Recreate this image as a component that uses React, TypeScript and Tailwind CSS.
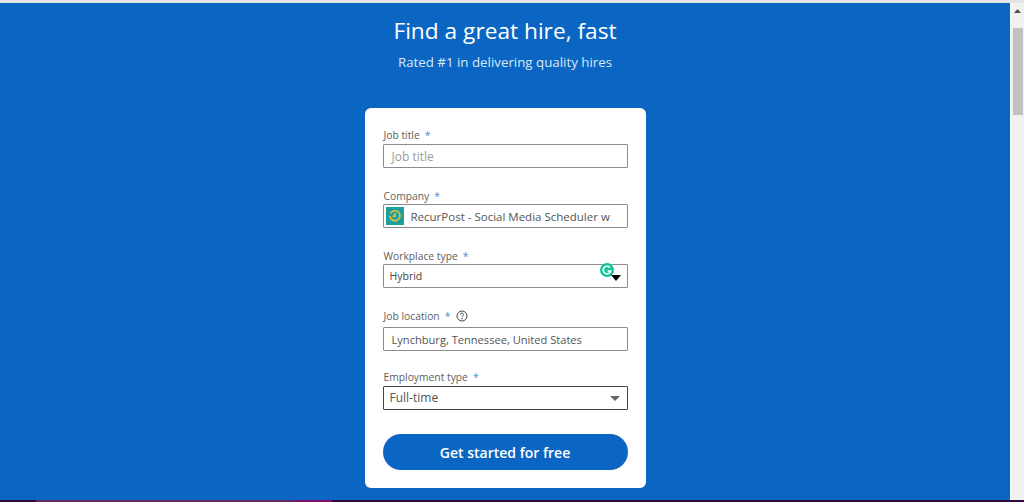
import React from "react";

const Star = () => <span className="ml-[5px] text-[#3d8fd6]">*</span>;

function Label({ children, help }: { children: string; help?: boolean }) {
  return (
    <div className="flex h-[18px] items-center pl-px text-[10.3px] leading-[18px] text-[#5e5e5e]">
      <span>{children}</span>
      <Star />
      {help && (
        <svg className="ml-[6px]" width="12" height="12" viewBox="0 0 12 12" fill="none">
          <circle cx="6" cy="6" r="5" stroke="#444" strokeWidth="1" />
          <path d="M4.4 4.8C4.4 3.8 5.1 3.2 6 3.2s1.6.6 1.6 1.4c0 1.2-1.6 1.2-1.6 2.4" stroke="#444" strokeWidth="1" />
          <circle cx="6" cy="8.7" r=".7" fill="#444" />
        </svg>
      )}
    </div>
  );
}

function Box({ children, dark, className = "" }: { children: React.ReactNode; dark?: boolean; className?: string }) {
  return (
    <div className={`relative flex h-[24px] w-[245px] items-center rounded-[1px] border bg-white ${dark ? "border-[#444]" : "border-[#8c8c8c]"} ${className}`}>
      {children}
    </div>
  );
}

export default function App() {
  return (
    <div className="flex h-[502px] w-[1024px] flex-col overflow-hidden bg-[#f1f1f1] font-['Open_Sans','Noto_Sans',sans-serif]">
      <div className="h-[3px] shrink-0 bg-[#e4e4e4]" />
      <div className="flex min-h-0 flex-1">
        <main className="flex w-[1010px] flex-col items-center bg-[#0a66c2]">
          <h1 className="mt-[13px] text-[22.7px] leading-[30px] font-normal text-white">Find a great hire, fast</h1>
          <p className="mt-[6px] text-[13.3px] leading-[20px] text-[#d9e8f6]">Rated #1 in delivering quality hires</p>
          <section className="mt-[36px] flex h-[380px] w-[281px] flex-col rounded-[6px] bg-white px-[18px] pt-[18px]">
            <Label>Job title</Label>
            <Box>
              <span className="pt-[2px] pl-[8px] text-[12px] text-[#9a9a9a]">Job title</span>
            </Box>
            <div className="mt-[19px]">
              <Label>Company</Label>
            </div>
            <Box className="mt-[-1px]">
              <span className="ml-[2px] flex h-[18px] w-[18px] items-center justify-center bg-[#1f9e9e]">
                <svg width="14" height="14" viewBox="0 0 14 14" fill="none" stroke="#e8c13c" strokeWidth="1.6">
                  <path d="M2.5 4.5A5 5 0 1 1 2 7" />
                  <path d="M7 4v3.3H4.5" />
                </svg>
              </span>
              <span className="ml-[7px] pt-[2px] text-[11.5px] whitespace-nowrap text-[#555]">RecurPost - Social Media Scheduler w</span>
            </Box>
            <div className="mt-[19px]">
              <Label>Workplace type</Label>
            </div>
            <Box className="mt-[-1px]">
              <span className="pt-[2px] pl-[6px] text-[10.5px] text-[#444]">Hybrid</span>
              <span className="absolute top-[-2px] left-[216px] flex h-[14px] w-[14px] items-center justify-center rounded-full bg-[#15c39a]">
                <svg width="10" height="10" viewBox="0 0 10 10" fill="none" stroke="#fff" strokeWidth="1.6">
                  <path d="M8 2.6A3.8 3.8 0 1 0 8.7 6H5.6" />
                </svg>
              </span>
              <svg className="absolute top-[10px] left-[227px]" width="10" height="6" viewBox="0 0 10 6">
                <path d="M0 0h10L5 6z" fill="#000" />
              </svg>
            </Box>
            <div className="mt-[19px]">
              <Label help>Job location</Label>
            </div>
            <Box className="mt-[2px]">
              <span className="pt-[2px] pl-[8px] text-[11.1px] text-[#555]">Lynchburg, Tennessee, United States</span>
            </Box>
            <div className="mt-[17px]">
              <Label>Employment type</Label>
            </div>
            <Box dark>
              <span className="pl-[6px] text-[12px] text-[#555]">Full-time</span>
              <svg className="absolute top-[9px] left-[226px]" width="10" height="5" viewBox="0 0 10 5">
                <path d="M0 0h10L5 5z" fill="#666" />
              </svg>
            </Box>
            <button className="mt-[24px] h-[36px] w-[245px] rounded-full bg-[#0a66c2] text-[14px] font-semibold text-white">
              Get started for free
            </button>
          </section>
        </main>
        <aside className="flex w-[14px] flex-col items-center border-l border-[#fafafa] bg-[#f1f1f1]">
          <svg className="mt-[6px]" width="7" height="4" viewBox="0 0 7 4">
            <path d="M0 4h7L3.5 0z" fill="#505050" />
          </svg>
          <div className="mt-[15px] h-[87px] w-[10px] bg-[#c1c1c1]" />
        </aside>
      </div>
      <div className="flex h-[2px] shrink-0 bg-[#2b0a3d]">
        <div className="w-[36px]" />
        <div className="w-[259px] bg-[#5f2a66]" />
        <div className="w-[37px] bg-[#7a0f66]" />
      </div>
    </div>
  );
}
